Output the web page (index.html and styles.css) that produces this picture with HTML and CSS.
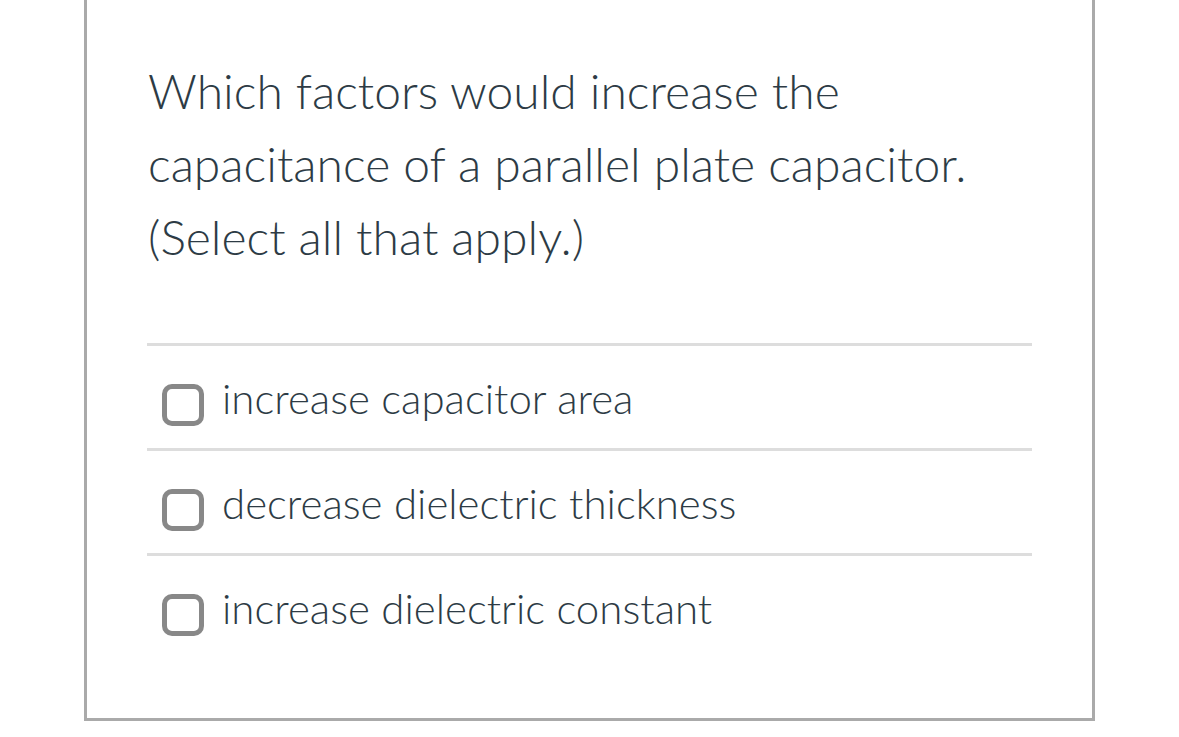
FILE: index.html
```html
<!DOCTYPE html>
<html>
<head>
<meta charset="utf-8">
<link rel="stylesheet" href="styles.css">
</head>
<body>
<div class="card">
  <div class="question">Which factors would increase the capacitance of a parallel plate capacitor. (Select all that apply.)</div>
  <div class="answers">
    <label class="answer"><span class="box"></span><span class="label">increase capacitor area</span></label>
    <label class="answer"><span class="box"></span><span class="label">decrease dielectric thickness</span></label>
    <label class="answer"><span class="box"></span><span class="label">increase dielectric constant</span></label>
  </div>
</div>
</body>
</html>
```
FILE: styles.css
```css
html, body {
  margin: 0;
  padding: 0;
  background: #ffffff;
}
body {
  font-family: Lato, "Open Sans", sans-serif;
  color: #2d3b45;
  font-weight: 300;
}
.card {
  margin-left: 84px;
  height: 718px;
  border: 3px solid #aaaaaa;
  border-top: none;
  padding: 0 60px 0 60px;
  box-sizing: content-box;
  width: 885px;
  display: flex;
  flex-direction: column;
}
.question {
  padding-left: 1px;
  margin-top: 54px;
  font-size: 48px;
  line-height: 73px;
}
.answers {
  margin-top: 70px;
  display: flex;
  flex-direction: column;
}
.answer {
  display: flex;
  align-items: center;
  gap: 18px;
  height: 102px;
  border-top: 3px solid #dddddd;
  padding-left: 15px;
}
.box {
  width: 32px;
  height: 32px;
  border: 5px solid #888888;
  border-radius: 10px;
  flex: none;
  margin-top: 16px;
}
.label {
  font-size: 42px;
  line-height: 48px;
  margin-top: 2px;
}
```
